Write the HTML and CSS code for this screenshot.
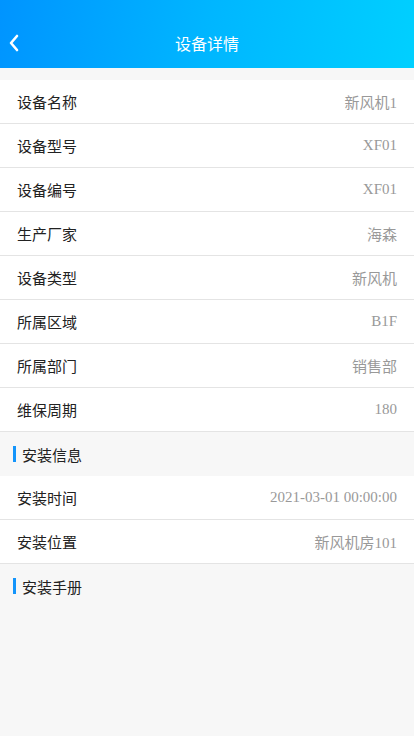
FILE: index.html
```html
<!DOCTYPE html>
<html lang="zh">
<head>
<meta charset="utf-8">
<title>设备详情</title>
<link rel="stylesheet" href="styles.css">
</head>
<body>
<header class="header">
  <div class="bar">
    <span class="back">
      <svg width="12" height="18" viewBox="0 0 12 18"><path d="M9 2 L3 9 L9 16" fill="none" stroke="#fff" stroke-width="2.6" stroke-linecap="round" stroke-linejoin="round"/></svg>
    </span>
    <h1 class="title">设备详情</h1>
  </div>
</header>
<main class="main">
  <section class="list">
    <div class="row"><span class="label">设备名称</span><span class="value">新风机1</span></div>
    <div class="row"><span class="label">设备型号</span><span class="value">XF01</span></div>
    <div class="row"><span class="label">设备编号</span><span class="value">XF01</span></div>
    <div class="row"><span class="label">生产厂家</span><span class="value">海森</span></div>
    <div class="row"><span class="label">设备类型</span><span class="value">新风机</span></div>
    <div class="row"><span class="label">所属区域</span><span class="value">B1F</span></div>
    <div class="row"><span class="label">所属部门</span><span class="value">销售部</span></div>
    <div class="row"><span class="label">维保周期</span><span class="value">180</span></div>
  </section>
  <div class="section-title"><span class="mark"></span>安装信息</div>
  <section class="list">
    <div class="row"><span class="label">安装时间</span><span class="value">2021-03-01 00:00:00</span></div>
    <div class="row"><span class="label">安装位置</span><span class="value">新风机房101</span></div>
  </section>
  <div class="section-title"><span class="mark"></span>安装手册</div>
</main>
</body>
</html>
```
FILE: styles.css
```css
* { box-sizing: border-box; }
html, body { margin: 0; padding: 0; }
body {
  background: #f7f7f7;
  font-family: "Liberation Serif", "Noto Sans CJK SC", serif;
  font-size: 15px;
  color: #222;
  min-height: 736px;
}
.header {
  height: 68px;
  padding-top: 19px;
  background: linear-gradient(100deg, #0094ff 0%, #00b6ff 50%, #00d0ff 100%);
}
.bar {
  height: 48px;
  display: flex;
  align-items: center;
  justify-content: center;
  position: relative;
}
.back {
  position: absolute;
  left: 8px;
  top: 15px;
  display: flex;
}
.title {
  margin: 0;
  font-size: 16px;
  font-weight: normal;
  color: #fff;
  font-family: "Noto Sans CJK SC", sans-serif;
}
.main { padding-top: 12px; }
.list { background: #fff; }
.row {
  height: 44px;
  display: flex;
  align-items: center;
  justify-content: space-between;
  padding: 0 17px;
  border-bottom: 1px solid #e4e4e4;
}
.label { color: #222; }
.value { color: #999; }
.section-title {
  height: 44px;
  display: flex;
  align-items: center;
  padding-left: 13px;
  color: #222;
}
.mark {
  width: 3px;
  height: 16px;
  background: #1495fb;
  margin-right: 6px;
}
```
